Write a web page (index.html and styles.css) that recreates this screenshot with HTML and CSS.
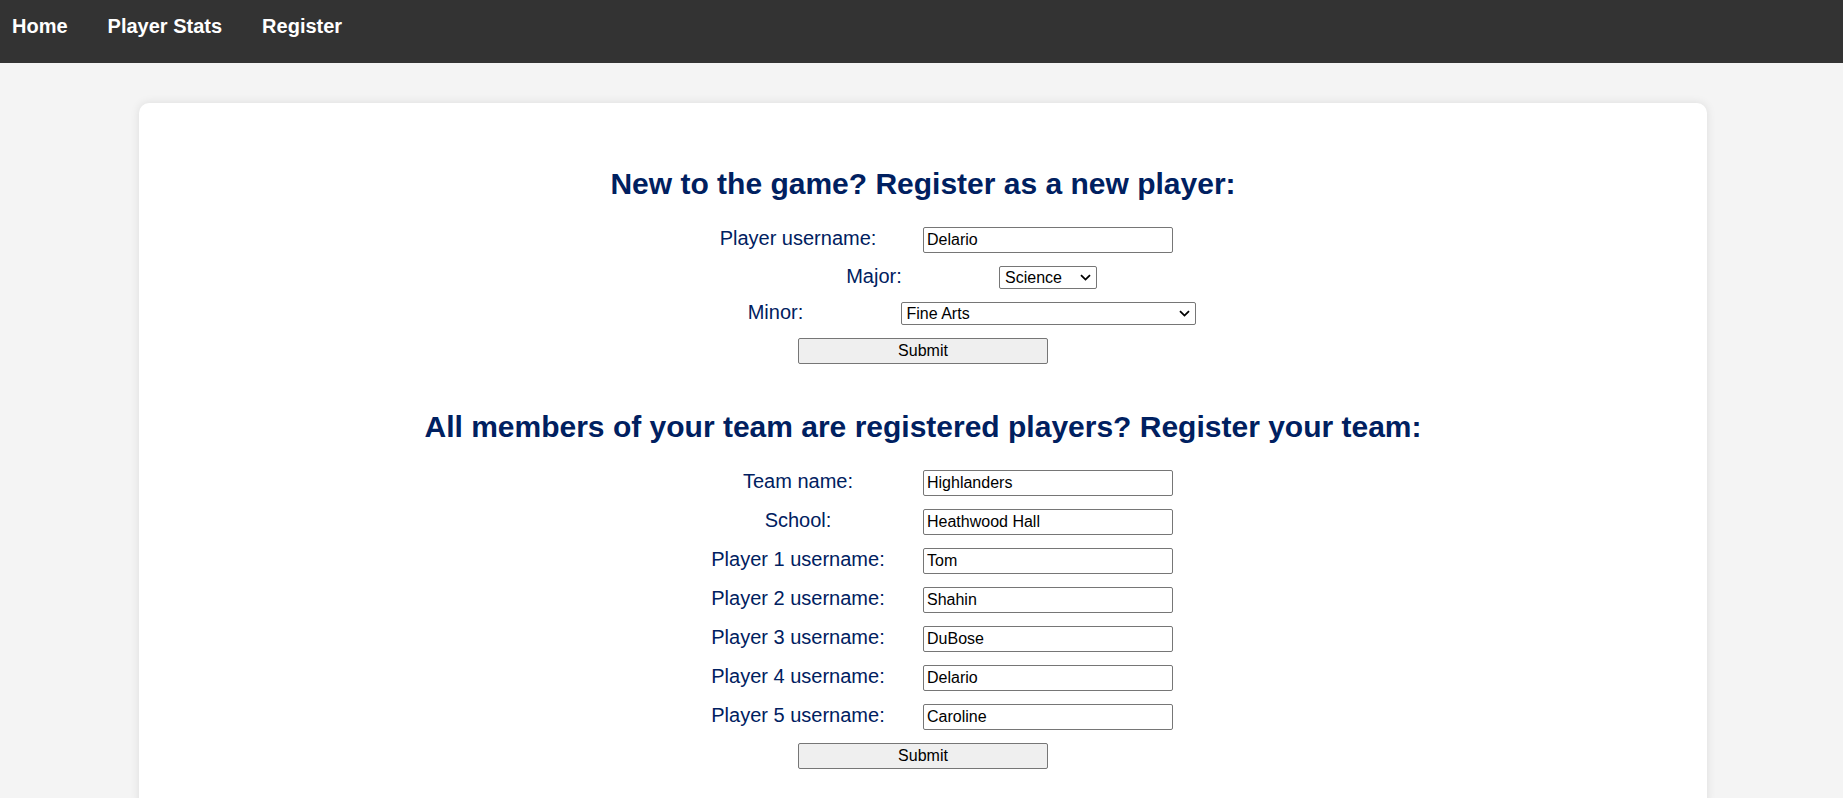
FILE: index.html
```html
<!DOCTYPE html>
<html lang="en">
<head>
<meta charset="utf-8">
<title>Register</title>
<link rel="stylesheet" href="styles.css">
</head>
<body>
<nav class="topnav">
  <a href="#" class="nav-link">Home</a>
  <a href="#" class="nav-link">Player Stats</a>
  <a href="#" class="nav-link">Register</a>
</nav>
<main class="card">
  <section class="reg-section">
    <h2 class="section-title">New to the game? Register as a new player:</h2>
    <form class="reg-form">
      <div class="form-row">
        <label class="form-label" for="player-username">Player username:</label>
        <input class="text-input" id="player-username" type="text" value="Delario">
      </div>
      <div class="form-row">
        <label class="form-label" for="major">Major:</label>
        <span class="select-wrap">
          <select class="select-input select-major" id="major">
            <option>Science</option>
            <option>Engineering</option>
          </select>
          <svg class="select-arrow" width="11" height="7" viewBox="0 0 11 7" aria-hidden="true"><path d="M1 1.2 L5.5 5.6 L10 1.2" fill="none" stroke="#000" stroke-width="1.8"/></svg>
        </span>
      </div>
      <div class="form-row">
        <label class="form-label" for="minor">Minor:</label>
        <span class="select-wrap">
          <select class="select-input select-minor" id="minor">
            <option>Fine Arts</option>
            <option>Science</option>
          </select>
          <svg class="select-arrow" width="11" height="7" viewBox="0 0 11 7" aria-hidden="true"><path d="M1 1.2 L5.5 5.6 L10 1.2" fill="none" stroke="#000" stroke-width="1.8"/></svg>
        </span>
      </div>
      <div class="form-row">
        <button class="submit-btn" type="button">Submit</button>
      </div>
    </form>
  </section>
  <section class="reg-section">
    <h2 class="section-title">All members of your team are registered players? Register your team:</h2>
    <form class="reg-form">
      <div class="form-row">
        <label class="form-label" for="team-name">Team name:</label>
        <input class="text-input" id="team-name" type="text" value="Highlanders">
      </div>
      <div class="form-row">
        <label class="form-label" for="school">School:</label>
        <input class="text-input" id="school" type="text" value="Heathwood Hall">
      </div>
      <div class="form-row">
        <label class="form-label" for="p1">Player 1 username:</label>
        <input class="text-input" id="p1" type="text" value="Tom">
      </div>
      <div class="form-row">
        <label class="form-label" for="p2">Player 2 username:</label>
        <input class="text-input" id="p2" type="text" value="Shahin">
      </div>
      <div class="form-row">
        <label class="form-label" for="p3">Player 3 username:</label>
        <input class="text-input" id="p3" type="text" value="DuBose">
      </div>
      <div class="form-row">
        <label class="form-label" for="p4">Player 4 username:</label>
        <input class="text-input" id="p4" type="text" value="Delario">
      </div>
      <div class="form-row">
        <label class="form-label" for="p5">Player 5 username:</label>
        <input class="text-input" id="p5" type="text" value="Caroline">
      </div>
      <div class="form-row">
        <button class="submit-btn" type="button">Submit</button>
      </div>
    </form>
  </section>
</main>
</body>
</html>
```
FILE: styles.css
```css
html, body {
  margin: 0;
  padding: 0;
}

body {
  background: #f4f4f4;
  font-family: "Liberation Sans", Arial, sans-serif;
}

.topnav {
  background: #333333;
  height: 63px;
  box-sizing: border-box;
  display: flex;
  gap: 40px;
  padding-left: 12px;
}

.nav-link {
  color: #ffffff;
  font-weight: bold;
  font-size: 20px;
  line-height: 23px;
  padding-top: 15px;
  text-decoration: none;
}

.card {
  background: #ffffff;
  margin: 40px 136px 0 139px;
  border-radius: 10px;
  box-shadow: 0 0 10px rgba(0, 0, 0, 0.1);
  padding: 40px 20px 40px;
}

.reg-section + .reg-section {
  padding-top: 22px;
}

.section-title {
  font-size: 30px;
  line-height: 34.5px;
  font-weight: bold;
  color: #002060;
  text-align: center;
  margin: 24px 0 25px;
}

.reg-section + .reg-section .section-title {
  margin-bottom: 26px;
}

.reg-form {
  margin: 0;
}

.form-row {
  display: flex;
  justify-content: center;
  align-items: baseline;
  margin-bottom: 13px;
}

.form-row:last-child {
  margin-bottom: 0;
}

.form-label {
  width: 250px;
  text-align: center;
  font-size: 20px;
  line-height: 20px;
  color: #002060;
}

.text-input {
  box-sizing: border-box;
  width: 250px;
  height: 26px;
  border: 1px solid #767676;
  border-radius: 2px;
  padding: 0 3px;
  font-family: "Liberation Sans", Arial, sans-serif;
  font-size: 16px;
  color: #000000;
  background: #ffffff;
}

.select-wrap {
  position: relative;
  display: inline-block;
}

.select-input {
  box-sizing: border-box;
  height: 23px;
  border: 1px solid #767676;
  border-radius: 2px;
  padding: 0 20px 0 5px;
  font-family: "Liberation Sans", Arial, sans-serif;
  font-size: 16px;
  color: #000000;
  background: #ffffff;
  appearance: none;
  -webkit-appearance: none;
}

.select-arrow {
  position: absolute;
  right: 6px;
  top: 8px;
  pointer-events: none;
}

.select-major {
  width: 98px;
}

.select-minor {
  width: 295px;
}

.submit-btn {
  box-sizing: border-box;
  width: 250px;
  height: 26px;
  border: 1px solid #767676;
  border-radius: 2px;
  background: #efefef;
  font-family: "Liberation Sans", Arial, sans-serif;
  font-size: 16px;
  color: #000000;
  padding: 0;
}
```
